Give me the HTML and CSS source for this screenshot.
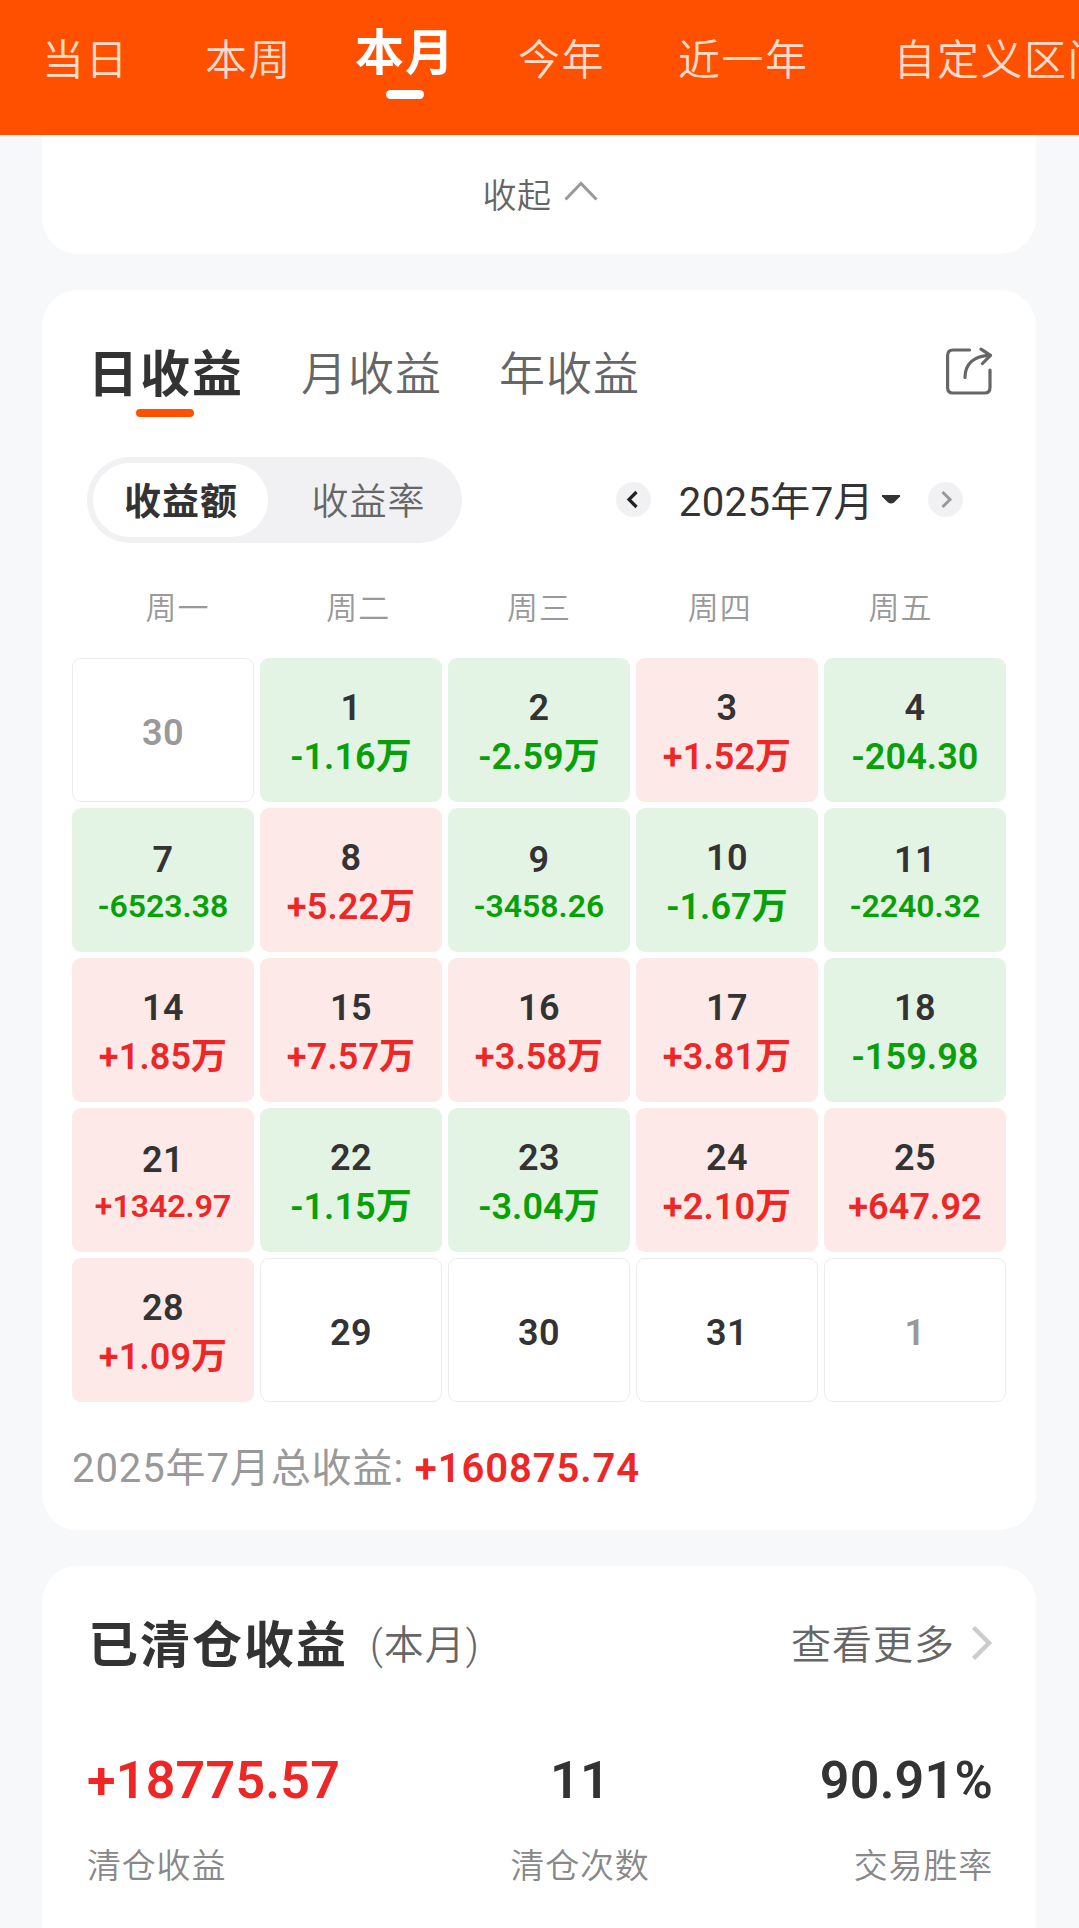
FILE: index.html
```html
<!doctype html>
<html lang="zh-CN">
  <head>
    <meta charset="utf-8">
    <title>收益日历</title>
    <link rel="stylesheet" href="styles.css">
  </head>
  <body>
    <nav class="range-bar">
      <a class="range range-day">当日</a>
      <a class="range">本周</a>
      <a class="range active">本月</a>
      <a class="range">今年</a>
      <a class="range range-year">近一年</a>
      <a class="range range-custom">自定义区间</a>
    </nav>

    <section class="card collapse">
      <span>收起</span>
      <svg width="34" height="20" viewBox="0 0 34 20"><path d="M1.500 18.500 17 2.500l15.500 16" fill="none" stroke="#999" stroke-width="3"/></svg>
    </section>

    <section class="card calendar">
      <div class="tabs">
        <a class="tab active">日收益</a>
        <a class="tab">月收益</a>
        <a class="tab">年收益</a>
        <svg class="share" width="48" height="50" viewBox="0 0 48 50" fill="none" stroke="#666" stroke-width="3.200" stroke-linecap="round" stroke-linejoin="round">
          <path d="M24.500 3H8Q2.600 3 2.600 8.500V40.500Q2.600 46 8 46H39.500Q45 46 45 40.500V23"/>
          <path d="M20 30.500C20 17 29 8.500 45 8.300"/>
          <path d="M36 2.200 45.500 8.300 37.500 16.500"/>
        </svg>
      </div>

      <div class="controls">
        <div class="switch">
          <span class="option active">收益额</span>
          <span class="option">收益率</span>
        </div>
        <div class="month">
          <span class="arrow">
            <svg width="35" height="35" viewBox="0 0 35 35"><path d="M20.500 10 13 17.500l7.500 7.500" fill="none" stroke="#222" stroke-width="3.200"/></svg>
          </span>
          <span class="month-name">2025年7月</span>
          <svg class="caret" width="18" height="9" viewBox="0 0 18 9"><path d="M0 0H18V1.500L12 7.500Q9 9.500 6 7.500L0 1.500Z" fill="#333"/></svg>
          <span class="arrow">
            <svg width="35" height="35" viewBox="0 0 35 35"><path d="M14.500 10l7.500 7.500-7.500 7.500" fill="none" stroke="#999" stroke-width="3"/></svg>
          </span>
        </div>
      </div>

      <div class="weekdays">
        <span>周一</span><span>周二</span><span>周三</span><span>周四</span><span>周五</span>
      </div>

      <div class="days">
        <div class="day other"><b>30</b></div>
        <div class="day down"><b>1</b><i>-1.16万</i></div>
        <div class="day down"><b>2</b><i>-2.59万</i></div>
        <div class="day up"><b>3</b><i>+1.52万</i></div>
        <div class="day down"><b>4</b><i>-204.30</i></div>

        <div class="day down"><b>7</b><i class="long">-6523.38</i></div>
        <div class="day up"><b>8</b><i>+5.22万</i></div>
        <div class="day down"><b>9</b><i class="long">-3458.26</i></div>
        <div class="day down"><b>10</b><i>-1.67万</i></div>
        <div class="day down"><b>11</b><i class="long">-2240.32</i></div>

        <div class="day up"><b>14</b><i>+1.85万</i></div>
        <div class="day up"><b>15</b><i>+7.57万</i></div>
        <div class="day up"><b>16</b><i>+3.58万</i></div>
        <div class="day up"><b>17</b><i>+3.81万</i></div>
        <div class="day down"><b>18</b><i>-159.98</i></div>

        <div class="day up"><b>21</b><i class="long">+1342.97</i></div>
        <div class="day down"><b>22</b><i>-1.15万</i></div>
        <div class="day down"><b>23</b><i>-3.04万</i></div>
        <div class="day up"><b>24</b><i>+2.10万</i></div>
        <div class="day up"><b>25</b><i>+647.92</i></div>

        <div class="day up"><b>28</b><i>+1.09万</i></div>
        <div class="day"><b>29</b></div>
        <div class="day"><b>30</b></div>
        <div class="day"><b>31</b></div>
        <div class="day other"><b>1</b></div>
      </div>

      <p class="total">2025年7月总收益: <strong>+160875.74</strong></p>
    </section>

    <section class="card closed">
      <div class="closed-head">
        <h2>已清仓收益</h2>
        <span class="period">(本月)</span>
        <a class="more">查看更多</a>
        <svg width="22" height="36" viewBox="0 0 22 36"><path d="M2.500 2.500 18 18 2.500 33.500" fill="none" stroke="#ccc" stroke-width="4.500"/></svg>
      </div>
      <div class="stats">
        <div class="stat">
          <strong class="red">+18775.57</strong>
          <span>清仓收益</span>
        </div>
        <div class="stat center">
          <strong>11</strong>
          <span>清仓次数</span>
        </div>
        <div class="stat right">
          <strong>90.91%</strong>
          <span>交易胜率</span>
        </div>
      </div>
    </section>
  </body>
</html>
```
FILE: styles.css
```css
* {
  box-sizing: border-box;
}
body {
  margin: 0;
  height: 1928px;
  overflow: hidden;
  background: #f7f8fa;
  color: #333;
  font-family: Roboto, "Noto Sans CJK SC", sans-serif;
}
svg {
  display: block;
  flex: none;
}

/* top range bar */
.range-bar {
  display: flex;
  gap: 63px;
  height: 135px;
  padding-left: 42px;
  overflow: hidden;
  background: #ff5000;
  white-space: nowrap;
}
.range {
  flex: none;
  padding-top: 31px;
  color: #ffdccc;
  font-size: 42px;
  font-weight: 350;
  line-height: 60px;
  letter-spacing: 1.5px;
}
.range-day {
  margin-right: 13px;
}
.range-year {
  margin-left: 10px;
}
.range-custom {
  margin-left: 22px;
}
.range.active {
  padding-top: 24px;
  color: #fff;
  font-size: 49px;
  font-weight: 700;
  letter-spacing: 1px;
}
.range.active::after {
  content: "";
  display: block;
  width: 38px;
  height: 9px;
  margin: 6px auto 0 31px;
  border-radius: 5px;
  background: #fff;
}

.card {
  width: 994px;
  margin: 0 0 36px 42px;
  border-radius: 36px;
  background: #fff;
}

.collapse {
  display: flex;
  justify-content: center;
  height: 119px;
  padding: 37px 0 0 2px;
  border-radius: 0 0 36px 36px;
  color: #666;
  font-size: 34px;
  font-weight: 350;
  line-height: 48px;
  letter-spacing: .5px;
}
.collapse svg {
  margin: 9px 0 0 12px;
}

/* calendar card */
.calendar {
  height: 1240px;
}
.tabs {
  display: flex;
  height: 167px;
  padding: 54px 43px 0 46px;
}
.tab {
  margin-right: 57px;
  color: #666;
  font-size: 46px;
  font-weight: 350;
  line-height: 60px;
  letter-spacing: 1px;
}
.tab.active {
  padding-top: 1px;
  color: #333;
  font-size: 50px;
  font-weight: 700;
  letter-spacing: 2px;
}
.tab.active::after {
  content: "";
  display: block;
  width: 58px;
  height: 8px;
  margin: 4px 0 0 48px;
  border-radius: 4px;
  background: #ff5000;
}
.share {
  margin: 3px 0 0 auto;
}

.controls {
  display: flex;
  justify-content: space-between;
  align-items: center;
  height: 86px;
  padding: 0 73px 0 45px;
}
.switch {
  display: flex;
  width: 375px;
  height: 86px;
  padding: 6px;
  border-radius: 43px;
  background: #f1f1f4;
}
.option {
  flex: 1;
  height: 74px;
  padding: 2px 0 0 13px;
  border-radius: 37px;
  color: #666;
  font-size: 37px;
  font-weight: 350;
  line-height: 76px;
  letter-spacing: 1px;
  text-align: center;
}
.option.active {
  flex: none;
  width: 175px;
  padding-left: 1px;
  background: #fff;
  color: #333;
  font-weight: 700;
}
.month {
  display: flex;
  align-items: center;
  height: 84px;
  margin-bottom: 2px;
}
.arrow {
  width: 35px;
  height: 35px;
  border-radius: 50%;
  background: #f1f1f4;
}
.month-name {
  margin-left: 28px;
  font-size: 40px;
  letter-spacing: .4px;
}
.caret {
  margin: 0 28px 0 8px;
}

.weekdays {
  display: grid;
  grid-template-columns: repeat(5, 1fr);
  padding: 40px 45px 0;
  color: #999;
  font-size: 31px;
  font-weight: 350;
  line-height: 52px;
  letter-spacing: 1px;
  text-align: center;
}
.days {
  display: grid;
  grid-template-columns: repeat(5, 182px);
  grid-auto-rows: 144px;
  gap: 6px;
  margin: 23px 30px 0;
}
.day {
  display: flex;
  flex-direction: column;
  align-items: center;
  justify-content: center;
  padding-top: 6px;
  border: 1px solid #ebebeb;
  border-radius: 9px;
  font-size: 36px;
  letter-spacing: .5px;
}
.day b,
.day i {
  font-style: normal;
  font-weight: 600;
  line-height: 49px;
}
.day i {
  letter-spacing: .1px;
}
.day .long {
  margin-bottom: 3px;
  font-size: 32px;
  line-height: 42px;
  letter-spacing: 0;
}
.day.up {
  border: 0;
  background: #fde9e8;
}
.day.up i {
  color: #ee2626;
}
.day.down {
  border: 0;
  background: #e4f4e4;
}
.day.down i {
  color: #07a007;
}
.day.other {
  color: #999;
}
.total {
  margin: 39px 30px 0;
  color: #999;
  font-size: 40px;
  line-height: 56px;
  letter-spacing: .9px;
}
.total strong {
  color: #ee2626;
  font-weight: 600;
}

/* closed positions */
.closed {
  height: 400px;
  padding: 50px 43px 0 45px;
}
.closed-head {
  display: flex;
  align-items: center;
  height: 60px;
}
.closed-head svg {
  margin-bottom: 6px;
}
h2 {
  margin: 0 0 0 1px;
  font-size: 50px;
  line-height: 60px;
  letter-spacing: 2px;
}
.period,
.more {
  color: #666;
  font-size: 40px;
  font-weight: 350;
  line-height: 60px;
}
.period {
  margin-left: 22px;
  letter-spacing: 1px;
}
.more {
  margin: 0 16px 0 auto;
  letter-spacing: 1px;
}
.stats {
  display: flex;
  justify-content: space-between;
  margin-top: 75px;
}
.stat {
  display: flex;
  flex-direction: column;
}
.stat.center {
  align-items: center;
}
.stat.right {
  align-items: flex-end;
}
.stat strong {
  font-size: 52px;
  font-weight: 600;
  line-height: 60px;
  letter-spacing: .2px;
}
.stat .red {
  color: #ee2626;
}
.stat span {
  margin-top: 31px;
  color: #888;
  font-size: 34px;
  font-weight: 350;
  line-height: 48px;
  letter-spacing: .8px;
}
```
